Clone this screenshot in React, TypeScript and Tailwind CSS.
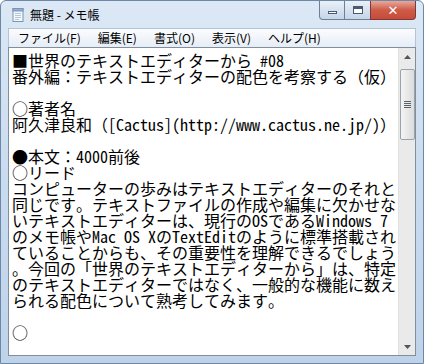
import React from "react";

const lines = [
  "■世界のテキストエディターから #08",
  "番外編：テキストエディターの配色を考察する（仮）",
  "",
  "○著者名",
  "阿久津良和（[Cactus](http://www.cactus.ne.jp/)）",
  "",
  "●本文：4000前後",
  "○リード",
  "コンピューターの歩みはテキストエディターのそれと",
  "同じです。テキストファイルの作成や編集に欠かせな",
  "いテキストエディターは、現行のOSであるWindows 7",
  "のメモ帳やMac OS XのTextEditのように標準搭載され",
  "ていることからも、その重要性を理解できるでしょう",
  "。今回の「世界のテキストエディターから」は、特定",
  "のテキストエディターではなく、一般的な機能に数え",
  "られる配色について熟考してみます。",
  "",
  "○",
];

const menus = ["ファイル(F)", "編集(E)", "書式(O)", "表示(V)", "ヘルプ(H)"];

function NotepadIcon() {
  return (
    <svg width="16" height="16" viewBox="0 0 16 16">
      <rect x="3" y="1.5" width="10" height="13" fill="#f4f8fc" stroke="#7d93ad" />
      <rect x="3" y="1.5" width="10" height="2.5" fill="#8fb2d8" stroke="#7d93ad" />
      <line x1="5" y1="6.5" x2="11" y2="6.5" stroke="#b5c6d9" />
      <line x1="5" y1="8.5" x2="11" y2="8.5" stroke="#b5c6d9" />
      <line x1="5" y1="10.5" x2="11" y2="10.5" stroke="#b5c6d9" />
      <line x1="5" y1="12.5" x2="9" y2="12.5" stroke="#b5c6d9" />
    </svg>
  );
}

export default function App() {
  return (
    <div
      className="w-[424px] h-[364px] flex flex-col bg-gradient-to-b from-[#dce8f5] via-[#c9dbef] to-[#bed3ea] border border-[#6d87a6] rounded-t-[6px] overflow-hidden"
      style={{ fontFamily: '"Noto Sans CJK JP", "Noto Sans", sans-serif' }}
    >
      {/* title bar */}
      <div className="h-[27px] flex items-start shrink-0">
        <div className="flex items-center gap-[4px] pl-[9px] pt-[6px]">
          <NotepadIcon />
          <span className="text-[12px] leading-[16px] text-black">無題 - メモ帳</span>
        </div>
        <div className="ml-auto mr-[7px] flex h-[19px]">
          <div className="w-[26px] border border-[#6e7f96] border-t-0 rounded-bl-[4px] bg-gradient-to-b from-[#e9f0f8] to-[#c5d5e8] flex items-center justify-center">
            <div className="w-[9px] h-[3px] border border-[#4a5a70] bg-white mt-[4px]" />
          </div>
          <div className="w-[25px] border-b border-[#6e7f96] bg-gradient-to-b from-[#e9f0f8] to-[#c5d5e8] flex items-center justify-center">
            <div className="w-[10px] h-[8px] border border-[#4a5a70] border-t-[3px] bg-white" />
          </div>
          <div className="w-[46px] border border-[#7a3a3a] border-t-0 rounded-br-[4px] bg-gradient-to-b from-[#e7a89c] via-[#cd5b48] to-[#c74b38] flex items-center justify-center">
            <span className="text-white text-[13px] font-bold leading-none" style={{ fontFamily: '"DejaVu Sans", sans-serif' }}>✕</span>
          </div>
        </div>
      </div>

      {/* menu bar */}
      <div className="mx-[7px] h-[19px] shrink-0 bg-gradient-to-b from-[#fbfcfe] to-[#e6edf6] border border-[#b4c3d5] border-b-0 flex items-center pl-[9px] gap-[17px]">
        {menus.map((m) => (
          <span key={m} className="text-[12px] leading-[16px] text-black">
            {m}
          </span>
        ))}
      </div>

      {/* edit area */}
      <div className="mx-[7px] mb-[7px] flex-1 flex bg-white border border-[#838e9b] min-h-0">
        <div
          className="flex-1 pl-[3px] pt-[4px] text-[16px] leading-[16px] text-black overflow-hidden"
          style={{ fontFamily: '"Noto Sans Mono CJK JP", "Noto Sans CJK JP", monospace' }}
        >
          {lines.map((l, i) => (
            <div key={i} className="h-[16px] whitespace-pre">
              {l}
            </div>
          ))}
        </div>
        <div className="w-[17px] bg-[#eaeaea] border-l border-[#e0e0e0] flex flex-col items-center">
          <div className="h-[17px] w-full flex items-center justify-center">
            <svg width="7" height="4" viewBox="0 0 7 4">
              <path d="M0 4 L3.5 0 L7 4 Z" fill="#4d5561" />
            </svg>
          </div>
          <div className="w-[15px] h-[71px] mt-[4px] rounded-[2px] border border-[#9aa3ad] bg-gradient-to-r from-[#f4f4f4] to-[#dcdcdc] flex flex-col items-center justify-center gap-[1px]">
            <div className="w-[7px] h-[1px] bg-[#5a626c]" />
            <div className="w-[7px] h-[1px] bg-[#5a626c]" />
            <div className="w-[7px] h-[1px] bg-[#5a626c]" />
            <div className="w-[7px] h-[1px] bg-[#5a626c]" />
          </div>
          <div className="mt-auto h-[17px] w-full flex items-center justify-center">
            <svg width="7" height="4" viewBox="0 0 7 4">
              <path d="M0 0 L3.5 4 L7 0 Z" fill="#4d5561" />
            </svg>
          </div>
        </div>
      </div>
    </div>
  );
}
